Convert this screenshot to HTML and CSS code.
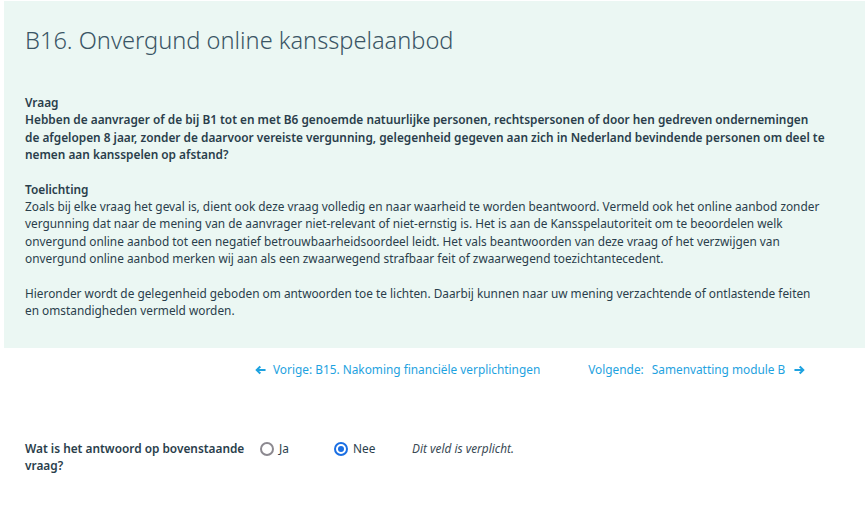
FILE: index.html
```html
<!DOCTYPE html>
<html lang="nl">
<head>
<meta charset="utf-8">
<title>B16. Onvergund online kansspelaanbod</title>
<link rel="stylesheet" href="styles.css">
</head>
<body>
<section class="panel">
  <h1 class="title">B16. Onvergund online kansspelaanbod</h1>
  <div class="block strong">
    <div>Vraag</div>
    <div>Hebben de aanvrager of de bij B1 tot en met B6 genoemde natuurlijke personen, rechtspersonen of door hen gedreven ondernemingen de afgelopen 8 jaar, zonder de daarvoor vereiste vergunning, gelegenheid gegeven aan zich in Nederland bevindende personen om deel te nemen aan kansspelen op afstand?</div>
  </div>
  <div class="block">
    <div class="strong">Toelichting</div>
    <p class="para">Zoals bij elke vraag het geval is, dient ook deze vraag volledig en naar waarheid te worden beantwoord. Vermeld ook het online aanbod zonder vergunning dat naar de mening van de aanvrager niet-relevant of niet-ernstig is. Het is aan de Kansspelautoriteit om te beoordelen welk onvergund online aanbod tot een negatief betrouwbaarheidsoordeel leidt. Het vals beantwoorden van deze vraag of het verzwijgen van onvergund online aanbod merken wij aan als een zwaarwegend strafbaar feit of zwaarwegend toezichtantecedent.</p>
    <p class="para gap">Hieronder wordt de gelegenheid geboden om antwoorden toe te lichten. Daarbij kunnen naar uw mening verzachtende of ontlastende feiten en omstandigheden vermeld worden.</p>
  </div>
</section>

<nav class="pager">
  <a class="pager-link prev" href="#">
    <svg class="arrow" viewBox="0 0 12 10" width="11" height="10"><path d="M0.3 5 L5 0.4 L6.6 2 L4.4 4 H11.5 V6 H4.4 L6.6 8 L5 9.6 Z"/></svg>
    <span>Vorige: B15. Nakoming financiële verplichtingen</span>
  </a>
  <a class="pager-link next" href="#">
    <span>Volgende:</span><span class="next-title">Samenvatting module B</span>
    <svg class="arrow" viewBox="0 0 12 10" width="11" height="10"><path d="M11.7 5 L7 0.4 L5.4 2 L7.6 4 H0.5 V6 H7.6 L5.4 8 L7 9.6 Z"/></svg>
  </a>
</nav>

<form class="question">
  <label class="q-label">Wat is het antwoord op bovenstaande vraag?</label>
  <div class="options">
    <label class="option"><input class="radio" type="radio" name="antwoord" value="ja"><span>Ja</span></label>
    <label class="option"><input class="radio" type="radio" name="antwoord" value="nee" checked><span>Nee</span></label>
    <span class="required">Dit veld is verplicht.</span>
  </div>
</form>
</body>
</html>
```

FILE: styles.css
```css
* { box-sizing: border-box; }

body {
  margin: 0;
  font-family: "Noto Sans", "Open Sans", "DejaVu Sans", sans-serif;
  font-size: 11.85px;
  line-height: 17.4px;
  color: #2a3e4b;
  background: #ffffff;
}

.panel {
  margin: 1px 0 0 4px;
  background: #ebf7f3;
  padding: 24px 40px 30px 21px;
  height: 347px;
}

.title {
  margin: 0 0 39px 0;
  font-size: 23.6px;
  line-height: 30px;
  font-weight: 300;
  color: #3a5565;
}

.block {
  margin-bottom: 17px;
}

.strong {
  font-weight: 600;
}

.para {
  margin: 0;
}

.para.gap {
  margin-top: 17.4px;
}

.pager {
  display: flex;
  padding: 13px 0 0 255px;
  gap: 48px;
}

.pager-link {
  display: flex;
  align-items: center;
  color: #1ea2e0;
  text-decoration: none;
}

.pager-link .arrow {
  fill: #1ea2e0;
}

.prev .arrow { margin-right: 7px; }
.next .arrow { margin-left: 9px; }
.next-title { margin-left: 8px; }

.question {
  display: flex;
  align-items: flex-start;
  margin: 62px 0 0 25px;
}

.q-label {
  width: 235px;
  font-weight: 600;
  line-height: 17px;
}

.options {
  display: flex;
  align-items: center;
  height: 17px;
}

.option {
  display: flex;
  align-items: center;
  width: 74px;
}

.radio {
  appearance: none;
  -webkit-appearance: none;
  width: 14px;
  height: 14px;
  margin: 0 5px 0 0;
  border: 2px solid #8c8990;
  border-radius: 50%;
  background: #fff;
  position: relative;
}

.radio:checked {
  border-color: #1b6fe3;
}

.radio:checked::after {
  content: "";
  position: absolute;
  left: 2px;
  top: 2px;
  width: 6px;
  height: 6px;
  border-radius: 50%;
  background: #1b6fe3;
}

.required {
  margin-left: 4px;
  font-style: italic;
  color: #3a4a55;
}
```
